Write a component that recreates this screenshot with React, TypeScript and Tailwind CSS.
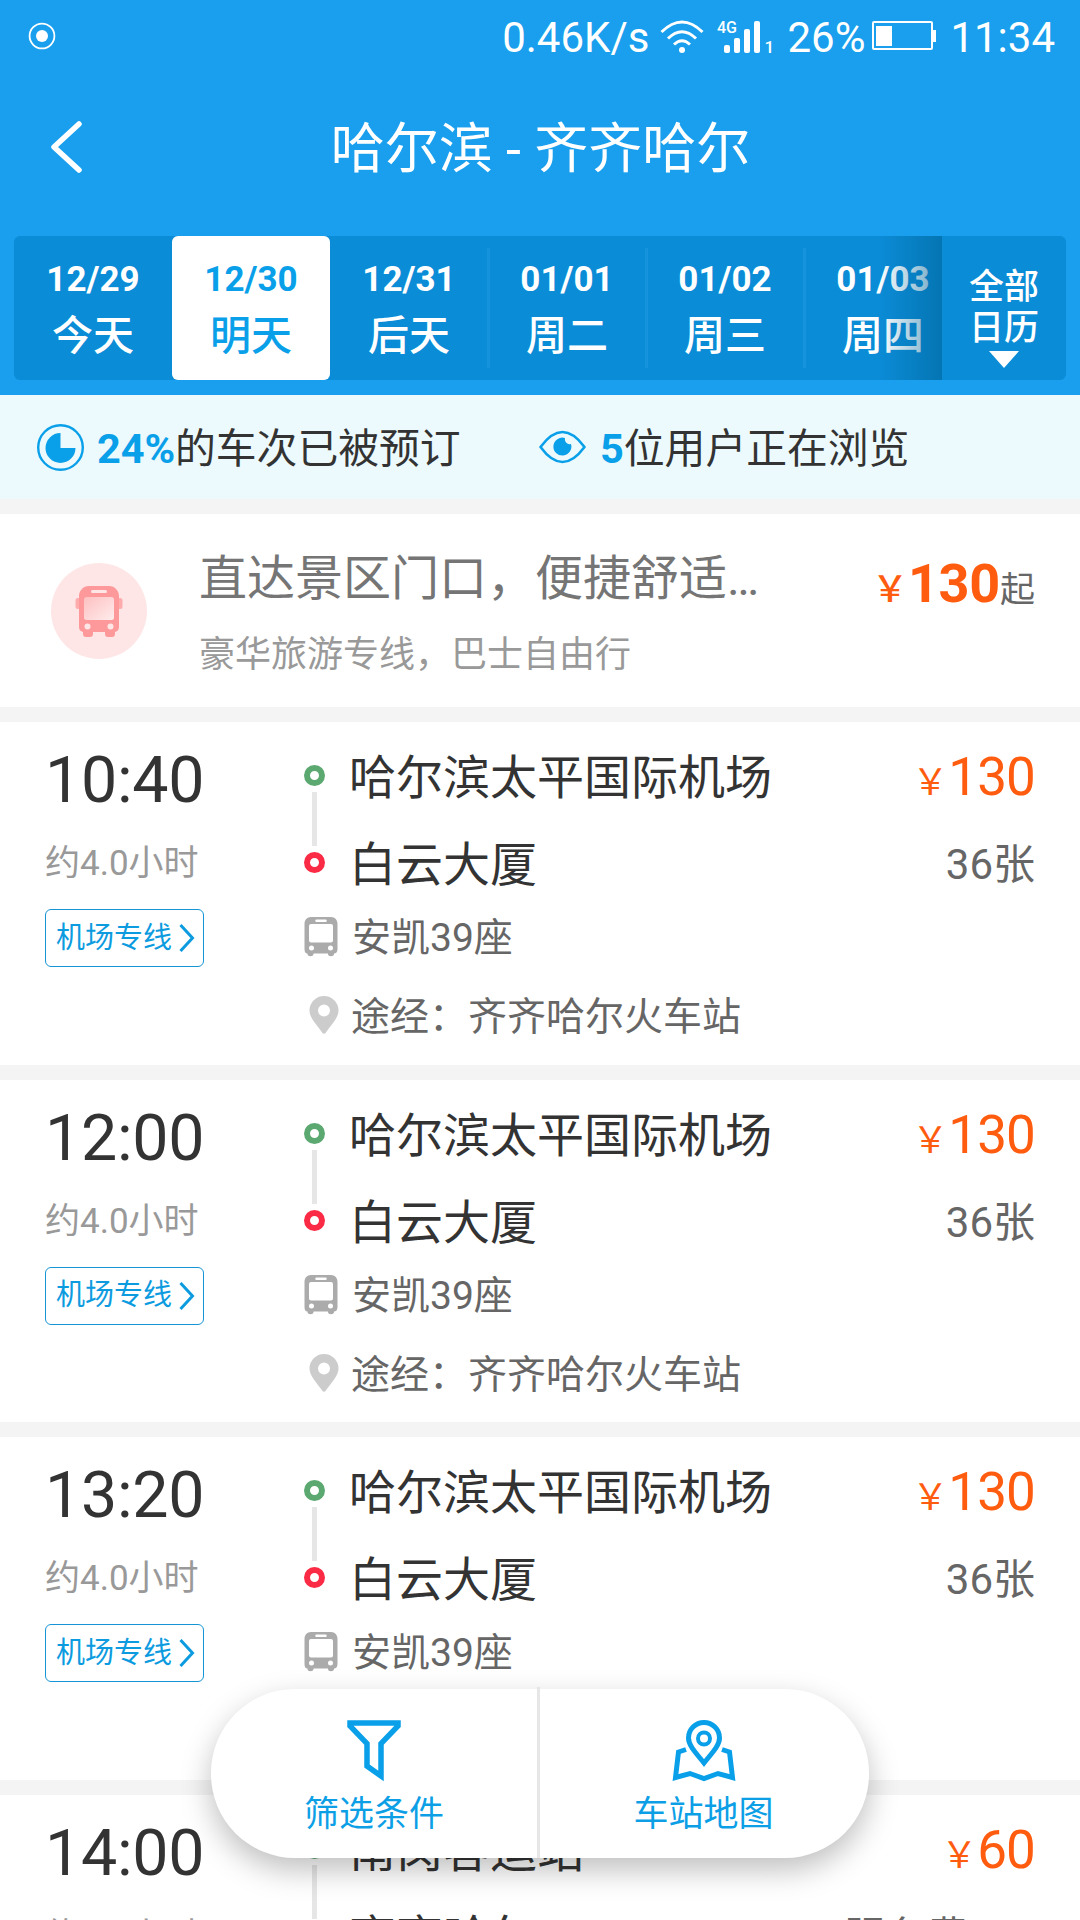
import { memo } from "react";

interface TripProps {
  time: string;
  duration: string;
  tag?: string;
  from: string;
  to: string;
  price: string;
  seats: string;
  bus: string;
  via: string;
}

const days = [
  { date: "12/29", label: "今天" },
  { date: "12/30", label: "明天" },
  { date: "12/31", label: "后天" },
  { date: "01/01", label: "周二" },
  { date: "01/02", label: "周三" },
  { date: "01/03", label: "周四" },
];

const airportLine = {
  duration: "约4.0小时",
  tag: "机场专线",
  from: "哈尔滨太平国际机场",
  to: "白云大厦",
  price: "130",
  seats: "36张",
  bus: "安凯39座",
  via: "途经：齐齐哈尔火车站",
};

const trips: Array<TripProps> = [
  { time: "10:40", ...airportLine },
  { time: "12:00", ...airportLine },
  { time: "13:20", ...airportLine },
  {
    time: "14:00",
    duration: "约4.0小时",
    from: "南岗客运站",
    to: "齐齐哈尔",
    price: "60",
    seats: "服务费2元",
    bus: "安凯39座",
    via: "途经：齐齐哈尔火车站",
  },
];

function StatusBar() {
  return (
    <div className="flex h-[76px] items-center pl-[28px] pr-[25px] text-[42px] leading-[76px] text-white">
      <svg width="28" height="28" viewBox="0 0 28 28" className="-mt-[4px]">
        <circle cx="14" cy="14" r="12.4" fill="none" stroke="#fff" strokeWidth="1.8" />
        <circle cx="14" cy="14" r="6" fill="#fff" />
      </svg>
      <span className="ml-auto">0.46K/s</span>
      <svg width="44" height="34" viewBox="0 0 44 34" className="-mt-[3px] ml-[11px]" fill="none" stroke="#fff" strokeWidth="3">
        <path d="M1.500 12 Q22 -8 42.500 12" />
        <path d="M8 18.500 Q22 5 36 18.500" />
        <path d="M14 24.500 Q22 17 30 24.500" />
        <circle cx="22" cy="30" r="3" fill="#fff" stroke="none" />
      </svg>
      <svg width="56" height="34" viewBox="0 0 56 34" className="-mt-[3px] ml-[13px] overflow-visible" fill="#fff">
        <text x="0" y="13" fontSize="17" fontWeight="500" textLength="20" lengthAdjust="spacingAndGlyphs">4G</text>
        <rect x="7" y="25" width="6" height="8" rx="2" />
        <rect x="17" y="18" width="6" height="15" rx="2" />
        <rect x="27" y="9" width="6" height="24" rx="2" />
        <rect x="37" y="1" width="6" height="32" rx="2" />
        <text x="47.500" y="33" fontSize="17" fontWeight="500">1</text>
      </svg>
      <span className="ml-[14px]">26%</span>
      <svg width="65" height="30" viewBox="0 0 65 30" className="-mt-[5px] ml-[7px]">
        <rect x="1" y="1" width="59" height="27" rx="1" fill="none" stroke="#fff" strokeWidth="2" />
        <rect x="4" y="5" width="16" height="20" fill="#fff" />
        <rect x="60" y="9" width="4" height="12" fill="#fff" />
      </svg>
      <span className="ml-[13px]">11:34</span>
    </div>
  );
}

function DateTabs() {
  return (
    <div className="mx-[14px] flex h-[144px] overflow-hidden rounded-[6px] bg-[#0b8cd7]">
      <div className="relative flex w-[928px] overflow-hidden">
        {days.map((el, i) => (
          <div
            key={i}
            className={
              i === 1
                ? "flex w-[158px] shrink-0 flex-col items-center rounded-[6px] bg-white pt-[22px] text-[#0aa0e9]"
                : "relative flex w-[158px] shrink-0 flex-col items-center pt-[22px] text-white"
            }
          >
            <span className="text-[35px] font-bold leading-[44px]">{el.date}</span>
            <span className="mt-[8px] text-[41px] font-medium leading-[52px]">{el.label}</span>
            {i > 1 && (
              <span className="absolute right-[-2px] top-[12px] h-[120px] w-[3px] bg-[#1593dc]" />
            )}
          </div>
        ))}
        <div className="absolute right-0 top-0 h-full w-[64px] bg-linear-to-r from-[#00669b]/0 to-[#00669b]/60" />
      </div>
      <div className="flex flex-1 flex-col items-center pt-[31px] text-[35px] font-medium leading-[41px] text-white">
        <span>全部</span>
        <span>日历</span>
        <svg width="30" height="17" viewBox="0 0 30 17" className="mt-[2px]">
          <path d="M0 0h30L15 17z" fill="#fff" />
        </svg>
      </div>
    </div>
  );
}

function Notice() {
  return (
    <div className="flex h-[104px] items-center bg-[#edfafd] pl-[37px] text-[40.800px] leading-[60px] text-[#333]">
      <svg width="47" height="47" viewBox="0 0 47 47">
        <circle cx="23.500" cy="23.500" r="22.300" fill="none" stroke="#0aa0e9" strokeWidth="2.400" />
        <path d="M23.500 9v15h15a15 15 0 1 1-15-15z" fill="#0aa0e9" />
      </svg>
      <span className="ml-[13px] mt-[4px] w-[78px] text-[41.500px] font-bold text-[#0aa0e9]">24%</span>
      <span className="mt-[4px] w-[364px]">的车次已被预订</span>
      <svg width="47" height="34" viewBox="0 0 47 34">
        <path d="M1.500 17Q23.500-13 45.500 17Q23.500 47 1.500 17z" fill="none" stroke="#0aa0e9" strokeWidth="2.600" strokeLinejoin="round" />
        <path d="M26 8a9 9 0 1 0 6 6a5 5 0 0 1-6-6z" fill="#0aa0e9" />
      </svg>
      <span className="ml-[14px] mt-[4px] text-[41.500px] font-bold text-[#0aa0e9]">5</span>
      <span className="mt-[4px]">位用户正在浏览</span>
    </div>
  );
}

function Banner() {
  return (
    <div className="flex h-[193px] bg-white pl-[51px] pr-[45px]">
      <div className="mt-[49px] flex size-[96px] items-center justify-center rounded-full bg-[#ffe6e6]">
        <svg width="48" height="52" viewBox="0 0 48 52">
          <defs>
            <linearGradient id="glass" x1="0" y1="0" x2="1" y2="1">
              <stop offset="0" stopColor="#fdc0c1" />
              <stop offset="1" stopColor="#ffecec" />
            </linearGradient>
          </defs>
          <rect x="0.500" y="13" width="5" height="11" rx="2.500" fill="#fdabac" />
          <rect x="42.500" y="13" width="5" height="11" rx="2.500" fill="#fdabac" />
          <path d="M14 1h20c6 0 10 5 10 10v31a5 5 0 0 1-4 5v2a3 3 0 0 1-3 3h-4a3 3 0 0 1-3-3v-2H18v2a3 3 0 0 1-3 3h-4a3 3 0 0 1-3-3v-2a5 5 0 0 1-4-5V11C4 6 8 1 14 1z" fill="#fd999b" />
          <rect x="16" y="5" width="16" height="3" rx="1.500" fill="#ffe6e6" />
          <rect x="9" y="12" width="30" height="23" rx="2.500" fill="url(#glass)" />
          <circle cx="12.500" cy="41.500" r="3" fill="#ffe6e6" />
          <circle cx="35.500" cy="41.500" r="3" fill="#ffe6e6" />
        </svg>
      </div>
      <div className="ml-[52px] flex flex-col pt-[35px]">
        <span className="text-[48px] leading-[60px] text-[#757575]">直达景区门口，便捷舒适…</span>
        <span className="mt-[22px] text-[36px] leading-[48px] text-[#999]">豪华旅游专线，巴士自由行</span>
      </div>
      <div className="ml-auto flex h-[64px] items-baseline pt-[38px] leading-[64px] text-[#ff5c0f]">
        <span className="text-[36px] font-medium">￥</span>
        <span className="text-[54px] font-bold tracking-[-0.3px]">130</span>
        <span className="text-[35px] text-[#666]">起</span>
      </div>
    </div>
  );
}

function BusIcon() {
  return (
    <svg width="34" height="40" viewBox="0 0 34 40">
      <path
        fillRule="evenodd"
        fill="#ababab"
        d="M7 0h20c4 0 6.500 3 6.500 7v25c0 3-1.500 4.500-3.500 4.500V37c0 3-6 3-6 0v-.5H9.500V37c0 3-6 3-6 0v-.5C1.500 36.500.5 35 .5 32V7C.5 3 3 0 7 0zM12.500 2.500a1 1 0 0 0 0 2.500h9a1 1 0 0 0 0-2.500zM7 7a2 2 0 0 0-2 2v14.500a2 2 0 0 0 2 2h20a2 2 0 0 0 2-2V9a2 2 0 0 0-2-2zM7.500 28.500a2.500 2.500 0 1 0 0 5a2.500 2.500 0 0 0 0-5zM26.500 28.500a2.500 2.500 0 1 0 0 5a2.500 2.500 0 0 0 0-5z"
      />
    </svg>
  );
}

function PinIcon() {
  return (
    <svg width="30" height="38" viewBox="0 0 30 38">
      <path
        fillRule="evenodd"
        fill="#ccc"
        d="M15 0a14.500 14.500 0 0 1 14.500 14.500C29.500 22 22 29 16.500 37a1.800 1.800 0 0 1-3 0C8 29 .5 22 .5 14.500A14.500 14.500 0 0 1 15 0zM15 8.500a6 6 0 1 0 0 12a6 6 0 0 0 0-12z"
      />
    </svg>
  );
}

function Trip({ time, duration, tag, from, to, price, seats, bus, via }: TripProps) {
  return (
    <div className="mb-[15px] flex h-[342.700px] shrink-0 bg-white px-[45px]">
      <div className="flex w-[259px] flex-col items-start pt-[22px]">
        <span className="text-[64.500px] leading-[72px] tracking-[-0.3px] text-[#333]">{time}</span>
        <span className="mt-[26px] text-[35px] leading-[44px] text-[#999]">{duration}</span>
        {tag && (
          <span className="mt-[23px] flex h-[58px] w-[159px] items-center rounded-[6px] border border-[#1595d5] pl-[10px] pt-px text-[29px] text-[#0d9bdf]">
            {tag}
            <svg width="16" height="28" viewBox="0 0 16 28" className="-mt-px ml-[7px]">
              <path d="M1.500 1L13.500 14L1.500 27" fill="none" stroke="#0d9bdf" strokeWidth="3" />
            </svg>
          </span>
        )}
      </div>
      <div className="flex flex-col">
        <div className="flex">
          <div className="flex w-[21px] flex-col items-center pt-[43px]">
            <span className="size-[21px] rounded-full border-[6px] border-[#5ca871]" />
            <span className="mt-[6px] h-[54px] w-[5px] bg-[#e6e6e6]" />
            <span className="mt-[6px] size-[21px] rounded-full border-[6px] border-[#fb2b46]" />
          </div>
          <div className="ml-[24px] flex flex-col pt-[26px] text-[47px] leading-[60px] text-[#333]">
            <span>{from}</span>
            <span className="mt-[27px]">{to}</span>
          </div>
        </div>
        <div className="mt-[18px] flex h-[50px] items-center text-[39px] leading-[50px] text-[#666]">
          <span className="-mt-[2px] w-[48px]">
            <BusIcon />
          </span>
          {bus}
        </div>
        <div className="mt-[29px] flex h-[50px] items-center text-[39px] leading-[50px] text-[#666]">
          <span className="-mt-[4px] w-[47px] pl-[5px]">
            <PinIcon />
          </span>
          {via}
        </div>
      </div>
      <div className="ml-auto flex flex-col items-end pt-[23px]">
        <div className="flex h-[64px] items-baseline leading-[64px] text-[#ff5c0f]">
          <span className="text-[36px]">￥</span>
          <span className="text-[53px] tracking-[-0.9px]">{price}</span>
        </div>
        <span className="mt-[31px] text-[42px] leading-[50px] text-[#666]">{seats}</span>
      </div>
    </div>
  );
}

function FloatingActions() {
  return (
    <div className="absolute left-[211px] top-[1689px] flex h-[169px] w-[658px] rounded-[84px] bg-white text-[35px] leading-[48px] text-[#0d9fe6] shadow-[0_12px_30px_rgba(0,0,0,0.25)]">
      <div className="flex w-[326px] flex-col items-center pt-[31px]">
        <svg width="54" height="63" viewBox="0 0 54 63">
          <path d="M3 3H51V6L34 23.500V56L20 46V23.500L3 6z" fill="none" stroke="#0aa0e9" strokeWidth="5.500" />
        </svg>
        <span className="mt-[8px]">筛选条件</span>
      </div>
      <span className="-mt-[2px] w-[3px] bg-[#e6e6e6]" />
      <div className="flex flex-1 flex-col items-center pr-[2px] pt-[31px]">
        <svg width="64" height="63" viewBox="0 0 64 63" fill="none" stroke="#0aa0e9" strokeWidth="5">
          <path d="M32 43C24 33 16.500 25.500 16.500 18a15.500 15.500 0 0 1 31 0C47.500 25.500 40 33 32 43z" />
          <circle cx="32" cy="18.500" r="6" strokeWidth="4" />
          <path d="M14 29.500L6.500 32L3.500 57.500L18 53.500L32 58.500L46 53.500L60.500 57.500L57.500 32L50 29.500" />
        </svg>
        <span className="mt-[8px]">车站地图</span>
      </div>
    </div>
  );
}

function App() {
  return (
    <div className="relative flex h-[1920px] w-[1080px] flex-col overflow-hidden bg-[#f4f4f4] font-['Roboto','Noto_Sans_CJK_SC',sans-serif]">
      <div className="h-[395px] shrink-0 bg-[#199fed]">
        <StatusBar />
        <div className="flex h-[160px] items-center pl-[50px]">
          <svg width="32" height="52" viewBox="0 0 32 52" className="-mt-[18px]">
            <path d="M29 3L4 26L29 49" fill="none" stroke="#fff" strokeWidth="5.500" strokeLinecap="round" strokeLinejoin="round" />
          </svg>
          <span className="-mt-[12px] mr-[81px] flex-1 text-center text-[54px] leading-[70px] text-white">
            哈尔滨 - 齐齐哈尔
          </span>
        </div>
        <DateTabs />
      </div>
      <div className="mb-[15px] shrink-0">
        <Notice />
      </div>
      <div className="mb-[15px] shrink-0">
        <Banner />
      </div>
      {trips.map((el, i) => (
        <Trip key={i} {...el} />
      ))}
      <FloatingActions />
    </div>
  );
}

export default memo(App);
